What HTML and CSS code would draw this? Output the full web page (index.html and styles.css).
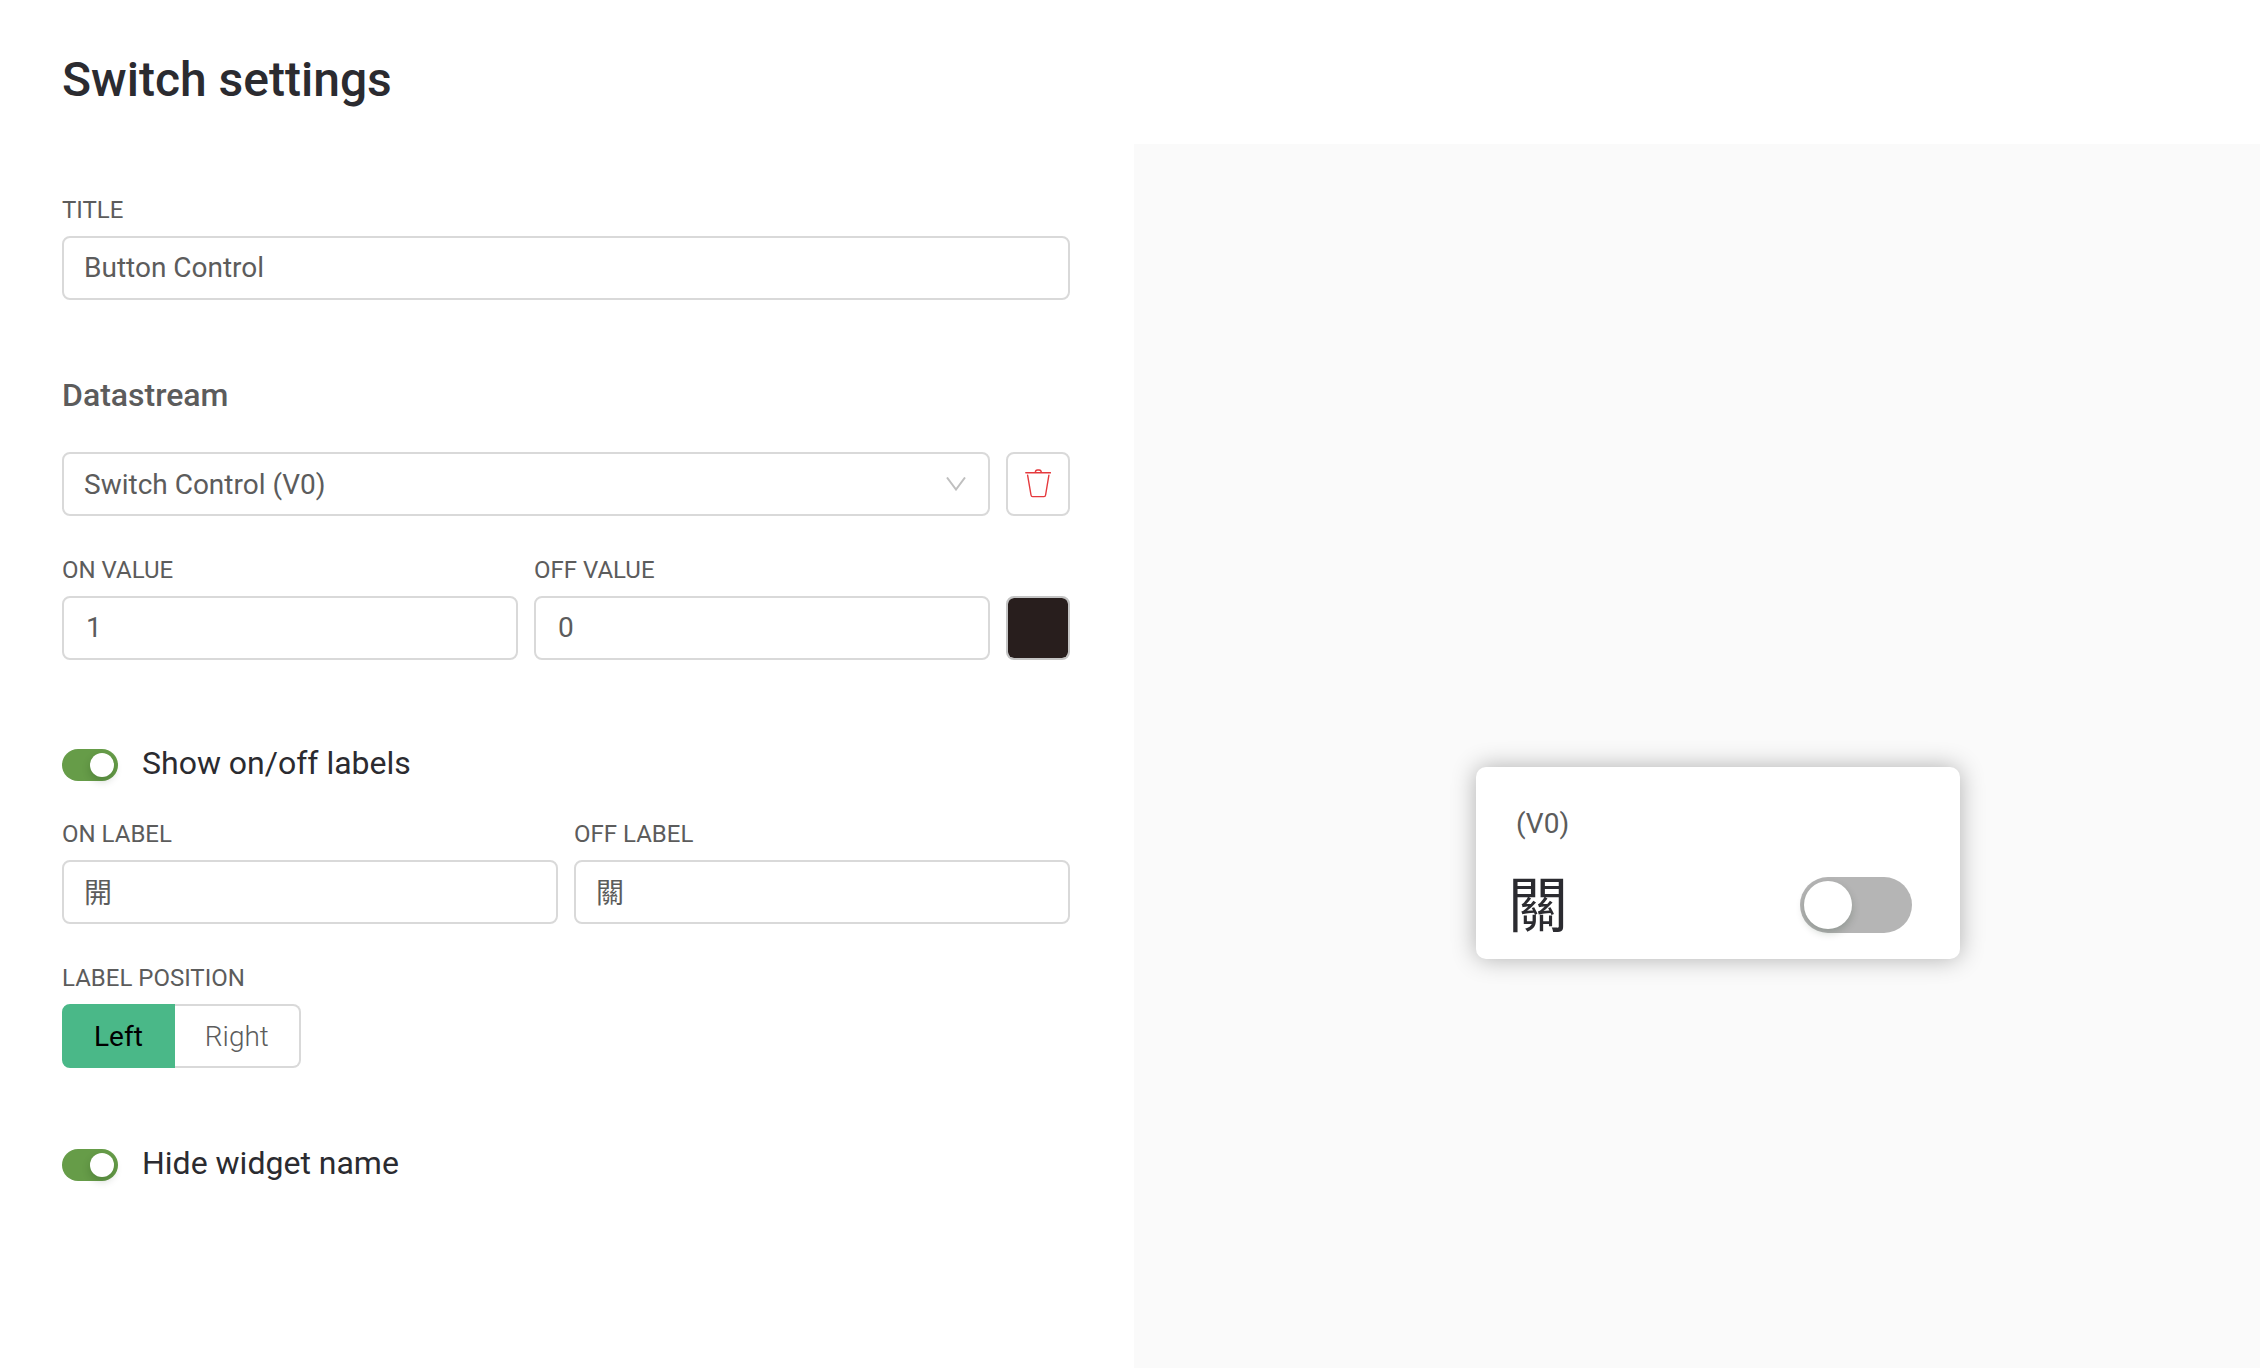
FILE: index.html
```html
<!DOCTYPE html>
<html lang="en">
<head>
<meta charset="utf-8">
<title>Switch settings</title>
<link rel="stylesheet" href="styles.css">
</head>
<body>
<div class="page">
  <header class="page-header">
    <h1 class="page-title">Switch settings</h1>
  </header>
  <main class="workspace">
    <form class="settings">
      <div class="field">
        <label class="field-label" for="title">TITLE</label>
        <input class="control" id="title" type="text" value="Button Control">
      </div>

      <section class="group">
        <h2 class="group-title">Datastream</h2>
        <div class="row">
          <div class="select-wrap">
            <select class="control control-select" aria-label="Datastream">
              <option>Switch Control (V0)</option>
            </select>
            <svg class="chevron" viewBox="0 0 20 14" aria-hidden="true"><path d="M1 0.5 10 12.5 19 0.5"/></svg>
          </div>
          <button class="icon-button" type="button" aria-label="Remove datastream">
            <svg class="trash" viewBox="0 0 26 30" aria-hidden="true">
              <path d="M.8 3.8H25.6M10.2 3.8C10.4 1.8 11.4 1 12.4 1H14.2C15.2 1 16.2 1.8 16.4 3.8M2.6 6.2 6 26Q6.200 27.600 7.600 27.600H19Q20.400 27.600 20.600 26L23.900 6.200"/>
            </svg>
          </button>
        </div>
        <div class="row row-values">
          <div class="field">
            <label class="field-label" for="on-value">ON VALUE</label>
            <input class="control control-number" id="on-value" type="text" inputmode="numeric" value="1">
          </div>
          <div class="field">
            <label class="field-label" for="off-value">OFF VALUE</label>
            <input class="control control-number" id="off-value" type="text" inputmode="numeric" value="0">
          </div>
          <input class="swatch" type="color" value="#281e1d" aria-label="Color">
        </div>
      </section>

      <section class="group group-labels">
        <label class="toggle-row">
          <input class="toggle" type="checkbox" checked>
          <span>Show on/off labels</span>
        </label>
        <div class="row">
          <div class="field">
            <label class="field-label" for="on-label">ON LABEL</label>
            <input class="control" id="on-label" type="text" value="開" lang="zh-Hant">
          </div>
          <div class="field">
            <label class="field-label" for="off-label">OFF LABEL</label>
            <input class="control" id="off-label" type="text" value="關" lang="zh-Hant">
          </div>
        </div>
        <fieldset class="position">
          <legend class="field-label">LABEL POSITION</legend>
          <div class="segments">
            <label class="segment"><input type="radio" name="position" checked>Left</label>
            <label class="segment"><input type="radio" name="position">Right</label>
          </div>
        </fieldset>
      </section>

      <label class="toggle-row toggle-row-last">
        <input class="toggle" type="checkbox" checked>
        <span>Hide widget name</span>
      </label>
    </form>

    <aside class="preview">
      <div class="widget">
        <div class="widget-name">(V0)</div>
        <div class="widget-body">
          <label class="widget-label" for="widget-switch" lang="zh-Hant">關</label>
          <input class="toggle toggle-large" id="widget-switch" type="checkbox">
        </div>
      </div>
    </aside>
  </main>
</div>
</body>
</html>
```

FILE: styles.css
```css
*,
*::before {
  box-sizing: border-box;
}

body {
  margin: 0;
  background: #fff;
  color: #5c5c5c;
  font: 400 28px/44px Roboto, "Noto Sans CJK TC", sans-serif;
}

input,
select,
button {
  margin: 0;
  color: inherit;
  font: inherit;
}

.page {
  display: flex;
  flex-direction: column;
  min-height: 100vh;
}

.page-header {
  padding: 48px 62px 32px;
}

.page-title {
  margin: 0;
  color: #2b2b30;
  font-size: 48px;
  font-weight: 500;
  line-height: 64px;
}

.workspace {
  display: grid;
  flex: 1;
  grid-template-columns: minmax(0, 1134fr) minmax(0, 1126fr);
}

.settings {
  padding: 48px 64px 64px 62px;
}

/* Fields */

.field {
  flex: 1;
  min-width: 0;
}

.field-label {
  display: block;
  padding: 0;
  font-size: 24px;
  line-height: 36px;
  margin-bottom: 8px;
}

.control {
  appearance: none;
  display: block;
  width: 100%;
  height: 64px;
  padding: 0 20px 2px;
  border: 2px solid #d9d9d9;
  border-radius: 8px;
  background: #fff;
}

.control-select {
  padding: 2px 20px 0;
}

.control-number {
  padding: 0 22px 2px;
}

.row {
  display: flex;
  align-items: flex-end;
  gap: 16px;
}

.row-values {
  margin-top: 36px;
}

.group {
  margin-top: 72px;
}

.group-title {
  margin: 0 0 34px;
  font-size: 32px;
  font-weight: 500;
  line-height: 46px;
}

.select-wrap {
  position: relative;
  flex: 1;
}

.chevron {
  position: absolute;
  top: 25px;
  right: 24px;
  width: 20px;
  height: 14px;
  fill: none;
  stroke: #bfbfbf;
  stroke-width: 2;
  pointer-events: none;
}

.icon-button {
  display: flex;
  align-items: center;
  justify-content: center;
  width: 64px;
  height: 64px;
  padding: 0;
  border: 2px solid #d9d9d9;
  border-radius: 8px;
  background: #fff;
}

.trash {
  width: 26px;
  height: 30px;
  fill: none;
  stroke: #e5393d;
  stroke-width: 1.4;
  stroke-linecap: round;
}

.swatch {
  appearance: none;
  width: 64px;
  height: 64px;
  padding: 0;
  border: 2px solid #c4c4c4;
  border-radius: 8px;
  background: #c4c4c4;
}

.swatch::-webkit-color-swatch-wrapper {
  padding: 0;
}

.swatch::-webkit-color-swatch {
  border: 0;
  border-radius: 6px;
}

/* Toggles */

.toggle-row {
  display: flex;
  align-items: center;
  gap: 24px;
  color: #2b2b30;
  font-size: 32px;
  line-height: 46px;
}

.toggle {
  appearance: none;
  flex: none;
  display: flex;
  width: 56px;
  height: 32px;
  padding: 4px;
  border-radius: 28px;
  background: #b5b5b5;
}

.toggle::before {
  content: "";
  width: 24px;
  height: 24px;
  border-radius: 50%;
  background: #fff;
  box-shadow: 0 4px 8px rgba(0, 35, 11, 0.2);
}

.toggle:checked {
  justify-content: flex-end;
  background: #669c48;
}

.toggle-row .toggle {
  margin-top: 4px;
}

.toggle-large {
  width: 112px;
  height: 56px;
}

.toggle-large::before {
  width: 48px;
  height: 48px;
}

.group-labels {
  margin-top: 80px;
}

.group-labels .row {
  margin-top: 30px;
}

.toggle-row-last {
  margin-top: 72px;
}

/* Label position */

.position {
  margin: 36px 0 0;
  padding: 0;
  border: 0;
}

.segments {
  display: flex;
}

.segment {
  height: 64px;
  padding: 8px 30px;
  border: 2px solid #d9d9d9;
  border-left: 0;
  border-radius: 0 8px 8px 0;
  font-weight: 300;
  line-height: 46px;
}

.segment input {
  position: absolute;
  opacity: 0;
}

.segment:first-child {
  border-left: 2px solid #d9d9d9;
  border-radius: 8px 0 0 8px;
}

.segment:has(input:checked) {
  border-color: #4ab888;
  background: #4ab888;
  color: #000;
  font-weight: 400;
}

/* Preview */

.preview {
  display: flex;
  align-items: center;
  justify-content: center;
  padding: 214px 0 0 42px;
  background: #fafafa;
}

.widget {
  width: 484px;
  padding: 35px 48px 26px 32px;
  border-radius: 10px;
  background: #fff;
  box-shadow: 0 0 24px rgba(0, 0, 0, 0.3);
}

.widget-name {
  padding-left: 8px;
}

.widget-body {
  display: flex;
  align-items: center;
  justify-content: space-between;
  height: 56px;
  margin-top: 31px;
}

.widget-label {
  padding-top: 4px;
  color: #2b2b30;
  font-size: 60px;
  line-height: 60px;
}
```
